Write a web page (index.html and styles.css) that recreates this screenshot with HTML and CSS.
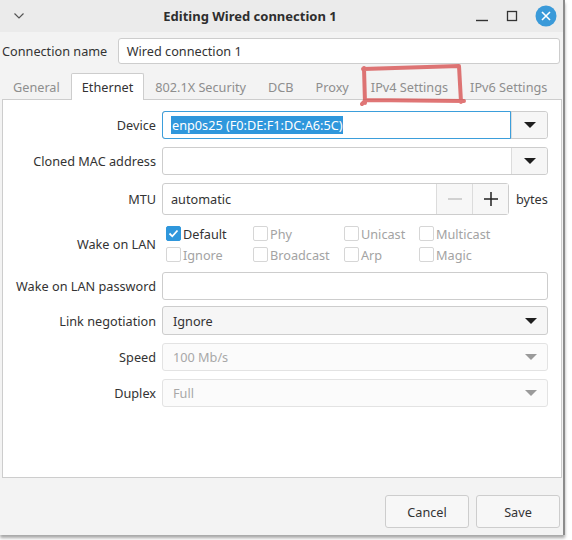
FILE: index.html
```html
<!DOCTYPE html>
<html>
<head>
<meta charset="utf-8">
<link rel="stylesheet" href="styles.css">
</head>
<body>
<div class="window">
  <div class="titlebar">
    <svg class="chev" width="12" height="8" viewBox="0 0 12 8"><path d="M1.5 1.5 L6 6 L10.5 1.5" fill="none" stroke="#555" stroke-width="1.2"/></svg>
    <div class="title">Editing Wired connection 1</div>
    <div class="controls">
      <svg width="14" height="14" viewBox="0 0 14 14"><path d="M1 11.5 H13" stroke="#333" stroke-width="1.4"/></svg>
      <svg width="14" height="14" viewBox="0 0 14 14"><rect x="2.5" y="2.5" width="9" height="9" fill="none" stroke="#333" stroke-width="1.3"/></svg>
      <svg width="22" height="22" viewBox="0 0 22 22"><circle cx="11" cy="11" r="10.5" fill="#3a9ad9"/><path d="M7 7 L15 15 M15 7 L7 15" stroke="#fff" stroke-width="1.6"/></svg>
    </div>
  </div>
  <div class="body">
    <div class="name-row">
      <span class="name-label">Connection name</span>
      <div class="input name-input">Wired connection 1</div>
    </div>
    <div class="tabs">
      <span class="tab">General</span>
      <span class="tab active">Ethernet</span>
      <span class="tab">802.1X Security</span>
      <span class="tab">DCB</span>
      <span class="tab">Proxy</span>
      <span class="tab">IPv4 Settings</span>
      <span class="tab">IPv6 Settings</span>
    </div>
    <div class="panel">
      <div class="form">
        <span class="lbl">Device</span>
        <div class="combo">
          <div class="combo-text focus"><span class="sel">enp0s25 (F0:DE:F1:DC:A6:5C)</span></div>
          <div class="combo-btn"><span class="tri"></span></div>
        </div>

        <span class="lbl">Cloned MAC address</span>
        <div class="combo">
          <div class="combo-text"></div>
          <div class="combo-btn"><span class="tri"></span></div>
        </div>

        <span class="lbl">MTU</span>
        <div class="mtu">
          <div class="spin">
            <div class="spin-text">automatic</div>
            <div class="spin-btn minus"><svg width="16" height="16" viewBox="0 0 16 16"><path d="M1 8 H15" stroke="#c4c4c4" stroke-width="1.5"/></svg></div>
            <div class="spin-btn plus"><svg width="16" height="16" viewBox="0 0 16 16"><path d="M1 8 H15 M8 1 V15" stroke="#222" stroke-width="1.5"/></svg></div>
          </div>
          <span class="unit">bytes</span>
        </div>

        <span class="lbl">Wake on LAN</span>
        <div class="checks">
          <span class="chk on"><span class="box"><svg width="15" height="15" viewBox="0 0 15 15"><path d="M3.5 7.5 L6.3 10.3 L11.5 4.5" fill="none" stroke="#fff" stroke-width="1.8"/></svg></span>Default</span>
          <span class="chk"><span class="box"></span>Phy</span>
          <span class="chk"><span class="box"></span>Unicast</span>
          <span class="chk"><span class="box"></span>Multicast</span>
          <span class="chk"><span class="box"></span>Ignore</span>
          <span class="chk"><span class="box"></span>Broadcast</span>
          <span class="chk"><span class="box"></span>Arp</span>
          <span class="chk"><span class="box"></span>Magic</span>
        </div>

        <span class="lbl">Wake on LAN password</span>
        <div class="input field"></div>

        <span class="lbl link-lbl">Link negotiation</span>
        <div class="dropdown link">Ignore<span class="tri"></span></div>

        <span class="lbl">Speed</span>
        <div class="dropdown disabled">100 Mb/s<span class="tri"></span></div>

        <span class="lbl">Duplex</span>
        <div class="dropdown disabled">Full<span class="tri"></span></div>
      </div>
    </div>
    <div class="buttons">
      <span class="btn">Cancel</span>
      <span class="btn">Save</span>
    </div>
  </div>
  <svg class="mark" width="110" height="45" viewBox="0 0 110 45">
    <path d="M3 6 L99 3 L101 39 M4 5 L5 40 M2 41 L6 37 L104 38" fill="none" stroke="rgba(214,72,72,0.75)" stroke-width="4" stroke-linecap="round" stroke-linejoin="round"/>
  </svg>
</div>
</body>
</html>
```
FILE: styles.css
```css
* { box-sizing: border-box; }
html, body { margin: 0; padding: 0; }
body {
  background: #ffffff;
  width: 572px;
  height: 540px;
  overflow: hidden;
  position: relative;
  font-family: "Noto Sans", "Open Sans", sans-serif;
  font-size: 12.7px;
  color: #3a3a3a;
}
.window {
  position: relative;
  width: 565px;
  height: 535px;
  background: #f3f3f3;
  border-right: 2px solid #8c8c8c;
  box-shadow: 0 3px 3px rgba(0,0,0,0.35);
  display: flex;
  flex-direction: column;
  z-index: 1;
}
.titlebar {
  height: 32px;
  background: #ebebeb;
  display: flex;
  align-items: center;
  position: relative;
  padding: 0 6px 0 13px;
}
.chev { display: block; }
.title {
  position: absolute;
  left: 0;
  right: 0;
  text-align: center;
  font-weight: bold;
  font-size: 13px;
  color: #2e2e2e;
  padding-right: 63px;
  pointer-events: none;
}
.controls {
  margin-left: auto;
  display: flex;
  align-items: center;
  gap: 16px;
}
.controls svg { display: block; }
.body {
  flex: 1;
  display: flex;
  flex-direction: column;
  padding: 6px 3px 0 2px;
}
.name-row {
  display: flex;
  align-items: center;
  height: 26px;
}
.name-label { width: 116px; color: #333; white-space: nowrap; }
.input {
  background: #fff;
  border: 1px solid #cdcdcd;
  border-radius: 3px;
}
.name-input {
  width: 443px;
  height: 26px;
  line-height: 24px;
  padding-left: 8px;
  color: #333;
}
.tabs {
  display: flex;
  margin-top: 9px;
  height: 26px;
  position: relative;
  z-index: 2;
}
.tab {
  flex-shrink: 0;
  white-space: nowrap;
  padding: 0 10px;
  line-height: 26px;
  color: #8e8e8e;
  border: 1px solid transparent;
  border-bottom: none;
}
.tab.active {
  background: #fff;
  border-color: #cdcdcd;
  color: #333;
  border-radius: 2px 2px 0 0;
  height: 27px;
}
.panel {
  background: #fff;
  border: 1px solid #cdcdcd;
  width: 560px;
  height: 379px;
  padding: 11px 13px 0 11px;
}
.form {
  display: grid;
  grid-template-columns: 142px 1fr;
  column-gap: 6px;
  row-gap: 8px;
  align-items: center;
}
.lbl {
  text-align: right;
  color: #333;
  white-space: nowrap;
}
.combo {
  display: flex;
  height: 28px;
  border: 1px solid #cdcdcd;
  border-radius: 3px;
  background: #fff;
}
.combo-text {
  flex: 1;
  display: flex;
  align-items: center;
  padding-left: 7px;
}
.combo-text.focus {
  margin: -1px 0 -1px -1px;
  border: 1px solid #3b9edb;
  border-radius: 3px 0 0 3px;
  padding-left: 8px;
}
.sel {
  background: #2f97dc;
  color: #fff;
  line-height: 18px;
  padding: 0 1px;
}
.combo-btn {
  width: 36px;
  border-left: 1px solid #dcdcdc;
  background: #f6f6f6;
  display: flex;
  align-items: center;
  justify-content: center;
  border-radius: 0 3px 3px 0;
}
.tri {
  width: 0;
  height: 0;
  border-left: 6px solid transparent;
  border-right: 6px solid transparent;
  border-top: 6px solid #1e1e1e;
}
.mtu {
  display: flex;
  align-items: center;
  height: 32px;
}
.spin {
  display: flex;
  height: 32px;
  width: 347px;
  border: 1px solid #cdcdcd;
  border-radius: 3px;
}
.spin-text {
  flex: 1;
  display: flex;
  align-items: center;
  padding-left: 8px;
  color: #333;
}
.spin-btn {
  width: 36px;
  background: #f7f7f7;
  border-left: 1px solid #dcdcdc;
  display: flex;
  align-items: center;
  justify-content: center;
}
.spin-btn svg { display: block; }
.unit { margin-left: 7px; color: #333; }
.checks {
  display: grid;
  grid-template-columns: 87px 91px 75px auto;
  grid-auto-rows: 21px;
  padding-left: 4px;
  height: 42px;
  margin-bottom: -1px;
}
.chk {
  display: flex;
  align-items: center;
  color: #a3a3a3;
  white-space: nowrap;
}
.chk.on { color: #333; }
.box {
  width: 15px;
  height: 15px;
  border: 1px solid #d6d6d6;
  border-radius: 2px;
  margin-right: 2px;
  background: #fff;
  flex-shrink: 0;
}
.chk.on .box {
  background: #2f97dc;
  border-color: #2f97dc;
}
.chk.on .box svg { display: block; margin: -1px; }
.field { height: 28px; }
.dropdown {
  height: 29px;
  border: 1px solid #cdcdcd;
  border-radius: 3px;
  background: #f6f6f6;
  display: flex;
  align-items: center;
  justify-content: space-between;
  padding: 0 10px 0 10px;
  color: #333;
}
.link, .link-lbl { margin-top: -2px; }
.dropdown.disabled {
  background: #fbfbfb;
  border-color: #e3e3e3;
  color: #a8a8a8;
  height: 28px;
}
.dropdown.disabled .tri { border-top-color: #9a9a9a; }
.buttons {
  display: flex;
  justify-content: flex-end;
  gap: 7px;
  margin-top: 17px;
  padding-right: 0;
}
.btn {
  width: 84px;
  height: 33px;
  border: 1px solid #cdcdcd;
  border-radius: 3px;
  background: #f7f7f7;
  display: flex;
  align-items: center;
  justify-content: center;
  color: #333;
}
.mark {
  position: absolute;
  left: 360px;
  top: 63px;
  z-index: 5;
}
```
